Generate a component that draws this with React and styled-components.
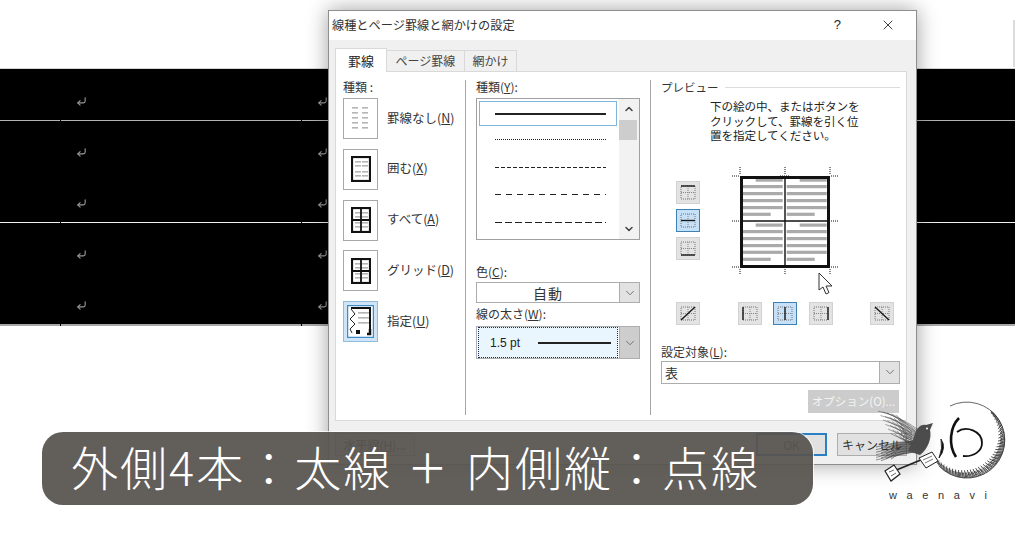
import React from 'react';
import styled, { createGlobalStyle } from 'styled-components';
import { ChevronDown, ChevronUp, CornerDownLeft, X } from 'lucide-react';

const GlobalStyle = createGlobalStyle`
  html, body {
    margin: 0;
    background: #fff;
  }
  * {
    box-sizing: border-box;
  }
`;

const Page = styled.div`
  position: relative;
  width: 1015px;
  height: 537px;
  overflow: hidden;
  background: #fff;
  font-family: "Noto Sans CJK JP", "Noto Sans", sans-serif;
  color: #222;
`;

/* document behind the dialog */
const DocTable = styled.div`
  margin-top: 68px;
  border-top: 1px solid #d4d4d4;
`;

const DocRow = styled.div`
  display: grid;
  grid-template-columns: 60px 240px 1fr;
  column-gap: 1px;
  height: ${props => props.$h}px;
  background: #000;
`;

const DocCell = styled.div`
  padding: ${props => props.$top}px 0 0 15px;
  border-bottom: ${props => props.$line || 'none'};
  color: #9a9a9a;
  line-height: 0;
`;

const EdgeMark = styled.div`
  position: absolute;
  top: 20px;
  right: 0;
  width: 2px;
  height: 47px;
  background: #dcdcdc;
`;

/* dialog */
const Dialog = styled.div`
  position: absolute;
  left: 328px;
  top: 10px;
  width: 589px;
  height: 455px;
  background: #f0f0f0;
  border: 1px solid #8e8e8e;
  box-shadow: 0 0 20px rgba(0, 0, 0, 0.38);
`;

const TitleBar = styled.div`
  display: flex;
  align-items: center;
  height: 29px;
  padding: 0 20px 2px 3px;
  background: #fff;
  font-size: 12.2px;
`;

const TitleText = styled.div`
  flex: 1;
  color: #333;
`;

const HelpMark = styled.div`
  margin-right: 39px;
  font-size: 13px;
  font-family: "Liberation Sans", sans-serif;
`;

const Tabs = styled.div`
  display: flex;
  align-items: flex-end;
  height: 31px;
  margin-left: 6px;
`;

const Tab = styled.div`
  width: ${props => props.$w}px;
  height: ${props => (props.$active ? 24 : 21)}px;
  display: flex;
  align-items: center;
  justify-content: center;
  padding-bottom: 1px;
  font-size: ${props => (props.$active ? 13 : 12)}px;
  border: 1px solid #d9d9d9;
  border-left: ${props => (props.$active ? '1px solid #d9d9d9' : 'none')};
  border-bottom: none;
  background: ${props => (props.$active ? '#fff' : '#f0f0f0')};
  margin-bottom: ${props => (props.$active ? -1 : 0)}px;
  position: relative;
  color: ${props => (props.$active ? '#222' : '#444')};
`;

const Panel = styled.div`
  display: grid;
  grid-template-columns: 129px 185px 1fr;
  width: 572px;
  height: 350px;
  margin-left: 6px;
  background: #fff;
  border: 1px solid #d9d9d9;
`;

const Column = styled.div`
  padding: 8px ${props => props.$right || 0}px 0 ${props => props.$left}px;
  position: relative;
`;

const Divided = styled(Column)`
  &::before {
    content: '';
    position: absolute;
    left: 0;
    top: 8px;
    bottom: 5px;
    width: 1px;
    background: #a6a6a6;
  }
`;

const Label = styled.div`
  font-size: 12px;
  line-height: 14px;
  height: 14px;
  color: #333;
  white-space: nowrap;
  u {
    text-underline-offset: 1px;
  }
`;

const OptionList = styled.div`
  display: flex;
  flex-direction: column;
  gap: 9.75px;
  margin-top: 4px;
`;

const OptionRow = styled.div`
  display: flex;
  align-items: center;
  gap: 9px;
  font-size: 12.5px;
  color: #333;
  white-space: nowrap;
`;

const OptionLabel = styled.span`
  padding-bottom: 3px;
`;

const OptionButton = styled.div`
  width: 35px;
  height: 41px;
  display: flex;
  align-items: center;
  justify-content: center;
  border: 1px solid ${props => (props.$active ? '#8fbbdc' : '#a8a8a8')};
  background: ${props => (props.$active ? '#cfe5f7' : '#fff')};
`;

const ListBox = styled.div`
  display: flex;
  width: 164px;
  height: 142px;
  margin: 4px 0 0;
  border: 1px solid #a0a0a0;
`;

const ListItems = styled.div`
  flex: 1;
  padding: 2px 2px 0;
`;

const ListItem = styled.div`
  height: ${props => (props.$active ? 25 : 27.5)}px;
  display: flex;
  align-items: center;
  padding: 0 10px 0 15px;
  border: 1px solid ${props => (props.$active ? '#7fb6dd' : 'transparent')};
`;

const LineSample = styled.div`
  width: 100%;
  height: ${props => props.$thick}px;
  background: repeating-linear-gradient(
    90deg,
    #222 0 ${props => props.$dash}px,
    transparent ${props => props.$dash}px ${props => props.$dash + props.$gap}px
  );
`;

const ScrollBar = styled.div`
  position: relative;
  width: 20px;
  display: flex;
  flex-direction: column;
  align-items: center;
  justify-content: space-between;
  padding: 4px 0;
  background: #f2f2f2;
  color: #444;
`;

const Thumb = styled.div`
  position: absolute;
  top: 21px;
  left: 0;
  right: 2px;
  height: 20px;
  background: #cdcdcd;
`;

const Combo = styled.div`
  display: flex;
  align-items: stretch;
  width: ${props => props.$w}px;
  height: ${props => props.$h}px;
  margin-top: ${props => props.$top || 0}px;
  font-size: 12px;
  border: 1px solid #adadad;
  background: #fff;
`;

const ComboValue = styled.div`
  flex: 1;
  display: flex;
  align-items: center;
  justify-content: ${props => (props.$center ? 'center' : 'flex-start')};
  padding: 0 ${props => (props.$center ? 0 : 3)}px;
  font-size: ${props => (props.$center ? 14 : 13)}px;
  letter-spacing: ${props => (props.$center ? 1 : 0)}px;
  color: #333;
`;

const FocusValue = styled.div`
  flex: 1;
  display: flex;
  align-items: center;
  gap: 18px;
  margin: 0 1px 0 1px;
  padding: 0 6px 0 11px;
  border: 1px dotted #1a2a55;
  background: #eaf6fd;
  font-family: "Liberation Sans", sans-serif;
  font-size: 12px;
  white-space: nowrap;
`;

const ComboButton = styled.div`
  flex: none;
  width: 20px;
  display: flex;
  align-items: center;
  justify-content: center;
  border-left: 1px solid #adadad;
  background: ${props => (props.$dark ? '#cdcdcd' : '#e2e2e2')};
  color: #666;
`;

const FieldGap = styled.div`
  height: ${props => props.$h}px;
`;

const PreviewHead = styled.div`
  display: flex;
  align-items: center;
  gap: 6px;
  font-size: 11.5px;
  line-height: 14px;
  color: #333;
  &::after {
    content: '';
    flex: 1;
    height: 1px;
    background: #dcdcdc;
  }
`;

const PreviewText = styled.div`
  margin: 5px 0 0 49px;
  font-size: 11.6px;
  line-height: 14.6px;
  letter-spacing: -0.1px;
  color: #222;
  white-space: pre;
`;

const PreviewRow = styled.div`
  display: flex;
  margin: 17px 0 0 15px;
  height: 122px;
`;

const SideButtons = styled.div`
  display: flex;
  flex-direction: column;
  gap: 5px;
  padding-top: 21px;
  margin-right: 25px;
`;

const EdgeButton = styled.div`
  width: 24px;
  height: 23px;
  display: flex;
  align-items: center;
  justify-content: center;
  border: 1px solid ${props => (props.$active ? '#3d81b5' : '#d2d2d2')};
  background: ${props => (props.$active ? '#c6e0f7' : '#e3e3e3')};
`;

const BottomButtons = styled.div`
  display: flex;
  justify-content: space-between;
  width: 218px;
  margin: 20px 0 0 15px;
`;

const MiddleButtons = styled.div`
  display: flex;
  gap: 11.5px;
`;

const TargetLabel = styled(Label)`
  margin-top: 20px;
`;

const OptionsRow = styled.div`
  display: flex;
  justify-content: flex-end;
  width: 238px;
  margin-top: 6px;
`;

const DisabledButton = styled.div`
  width: 91px;
  height: 23px;
  display: flex;
  align-items: center;
  justify-content: center;
  background: #cccccc;
  color: #f4f4f4;
  font-size: 11.5px;
  white-space: nowrap;
`;

const Footer = styled.div`
  display: flex;
  justify-content: space-between;
  margin: 12px 0 0 6px;
  width: 572px;
`;

const FooterGroup = styled.div`
  display: flex;
  gap: 10px;
`;

const FooterButton = styled.div`
  width: ${props => props.$w}px;
  height: 23px;
  display: flex;
  align-items: center;
  justify-content: center;
  font-size: 12px;
  color: #333;
  background: #e1e1e1;
  border: ${props => (props.$primary ? '2px solid #2c7fc4' : '1px solid #adadad')};
  white-space: nowrap;
`;

const Pointer = styled.svg`
  position: absolute;
  left: 817px;
  top: 271px;
`;

/* caption */
const Caption = styled.div`
  position: absolute;
  left: 42px;
  top: 432px;
  width: 771px;
  height: 73px;
  padding: 0 0 6px 29px;
  display: flex;
  align-items: center;
  border-radius: 21px;
  background: rgba(88, 84, 80, 0.94);
  box-shadow: 0 0 0 1px rgba(255, 255, 255, 0.75);
  color: #fff;
  font-size: 47px;
  letter-spacing: 2px;
  font-weight: 300;
  line-height: 1;
  white-space: pre;
`;

const CaptionPlus = styled.span`
  margin: 0 4px 0 3px;
  font-size: 40px;
  font-weight: 400;
`;

/* logo */
const LogoBox = styled.div`
  position: absolute;
  left: 870px;
  top: 395px;
  width: 140px;
  height: 112px;
`;

const LogoText = styled.div`
  position: absolute;
  left: 19px;
  top: 93px;
  font-family: "Liberation Sans", sans-serif;
  font-size: 11px;
  line-height: 14px;
  letter-spacing: 9.6px;
  color: #333;
`;

const dash = (x, y, w) => <rect x={x} y={y} width={w} height="1.6" fill="#b5b5b5" />;

const TextDashes = ({ cols, top, rows, step }) => (
  <>
    {cols.map(x =>
      Array.from({ length: rows }).map((_, i) => (
        <React.Fragment key={`${x}-${i}`}>{dash(x, top + i * step, 6)}</React.Fragment>
      ))
    )}
  </>
);

const OptionIcon = ({ type }) => {
  if (type === 'none') {
    return (
      <svg width="21" height="26" viewBox="0 0 21 26">
        <TextDashes cols={[2, 12]} top={1} rows={5} step={5} />
      </svg>
    );
  }
  if (type === 'custom') {
    return (
      <svg width="27" height="33" viewBox="0 0 27 33">
        <rect x="0" y="0" width="27" height="33" fill="#fff" stroke="#3e8dc9" strokeWidth="2.5" />
        <path d="M4 3H23V25" fill="none" stroke="#111" strokeWidth="2" />
        <path d="M4 4L8 9L3 14L8 19L3 24L5 28" fill="none" stroke="#222" strokeWidth="1" />
        <TextDashes cols={[11, 16]} top={7} rows={3} step={5} />
        <rect x="9" y="25" width="4" height="4" fill="#111" />
        <path d="M20 29H23V24" fill="none" stroke="#111" strokeWidth="2.5" />
      </svg>
    );
  }
  return (
    <svg width="20" height="26" viewBox="0 0 20 26">
      <rect x="1" y="1" width="18" height="24" fill="#fff" stroke="#111" strokeWidth="2.2" />
      <TextDashes cols={[4, 11]} top={5} rows={2} step={4} />
      <TextDashes cols={[4, 11]} top={15} rows={2} step={4} />
      {type !== 'box' && <path d="M10 1V25M1 13H19" stroke="#111" strokeWidth="1.8" />}
    </svg>
  );
};

const EdgeIcon = ({ line }) => (
  <svg width="18" height="17" viewBox="0 0 18 17">
    <rect x="2" y="2" width="14" height="13" fill="none" stroke="#777" strokeWidth="1" strokeDasharray="1 1" />
    <path d="M9 2V15M2 8.5H16" fill="none" stroke="#888" strokeWidth="1" strokeDasharray="1 1" />
    <path d={line} fill="none" stroke="#1a1a1a" strokeWidth="1.4" />
  </svg>
);

const barRows = [
  { top: 18.5, first: true },
  { top: 25 }, { top: 32 }, { top: 39 }, { top: 46 },
  { top: 52.7, last: true },
  { top: 63.5, first: true },
  { top: 70 }, { top: 77 }, { top: 84 }, { top: 90.7 },
  { top: 97.7, last: true },
];

const barsFor = (left, row) => {
  if (row.first) return { x: left + 13, w: 27 };
  if (row.last) return { x: left, w: 28 };
  return { x: left, w: 40 };
};

const PreviewDrawing = () => (
  <svg width="120" height="122" viewBox="0 0 120 122">
    {[17.7, 61.7].map(left =>
      barRows.map(row => {
        const { x, w } = barsFor(left, row);
        return <rect key={`${left}-${row.top}`} x={x} y={row.top} width={w} height="3.2" fill="#aaa" />;
      })
    )}
    <path d="M60 17V107" stroke="#555" strokeWidth="2" />
    <path d="M16 61H104" stroke="#111" strokeWidth="1.5" />
    <rect x="16.5" y="17.5" width="87" height="89" fill="none" stroke="#111" strokeWidth="3" />
    <path
      d="M15 7V15M60 7V15M105 7V15M15 109V115M60 109V115M105 109V115M7 16H14M106 16H113M7 61H14M106 61H113M7 107H14M106 107H113M55 16H65M55 107H65"
      fill="none"
      stroke="#111"
      strokeWidth="1"
      strokeDasharray="1 1"
    />
  </svg>
);

const ringHatch = Array.from({ length: 110 }).map((_, i) => {
  const a = (-50 + (i * 200) / 110) * (Math.PI / 180);
  const swell = Math.max(0, Math.sin(((i + 6) / 122) * Math.PI));
  const len = 1 + swell * 8 * (i % 3 === 0 ? 1 : 0.65);
  const r = 38;
  const x1 = 97 + Math.cos(a) * r;
  const y1 = 45 + Math.sin(a) * r;
  const x2 = 97 + Math.cos(a + 0.05) * (r - len);
  const y2 = 45 + Math.sin(a + 0.05) * (r - len);
  return `M${x1.toFixed(1)} ${y1.toFixed(1)}L${x2.toFixed(1)} ${y2.toFixed(1)}`;
});

const wingHatch = Array.from({ length: 30 }).map((_, i) => {
  const y = 16 + i * 0.9;
  const x1 = 8 + (i % 5) * 4 + i * 0.5;
  const x2 = 50 - (i % 3) * 4;
  const y2 = 36 + i * 0.5;
  return `M${x1.toFixed(1)} ${y.toFixed(1)}Q30 ${(y + 5).toFixed(1)} ${x2.toFixed(1)} ${y2.toFixed(1)}`;
});

const tailHatch = Array.from({ length: 22 }).map((_, i) => {
  const y = 46 + i * 0.65;
  const x1 = 6 + (i % 4) * 5;
  return `M${x1} ${(y + 6).toFixed(1)}Q26 ${y.toFixed(1)} 48 ${(46 + i * 0.5).toFixed(1)}`;
});

const LogoMark = () => (
  <svg width="140" height="92" viewBox="0 0 140 92">
    <path d="M80 11A38 38 0 1 1 69 71" fill="none" stroke="#222" strokeWidth="0.7" />
    <path d={ringHatch.join('')} fill="none" stroke="#222" strokeWidth="0.8" />
    <path d="M71 44Q77 53 69 63Q73 53 71 44Z" fill="#111" stroke="#111" strokeWidth="0.8" />
    <path d="M89 23C80 32 78 50 86 62" fill="none" stroke="#111" strokeWidth="2.6" />
    <path d="M87 37C96 30 112 36 112 48C112 56 104 62 93 61" fill="none" stroke="#111" strokeWidth="1.8" />
    <path d={wingHatch.join('')} fill="none" stroke="#444" strokeWidth="0.5" />
    <path d={tailHatch.join('')} fill="none" stroke="#333" strokeWidth="0.55" />
    <path d="M44 42C46 34 50 29 56 30L63 28L60 35C62 43 58 54 50 60L38 56Z" fill="#4c4c4c" />
    <circle cx="57" cy="33.5" r="1" fill="#fff" />
    <path d="M24 76L58 62" stroke="#222" strokeWidth="1.8" />
    <path d="M49 63L62 57L68 66L56 73Z" fill="#fff" stroke="#222" strokeWidth="1" />
    <path d="M53 65L62 61M55 68L63 64" stroke="#555" strokeWidth="0.8" />
    <path d="M15 76L24 70L30 79L21 86Z" fill="#fff" stroke="#222" strokeWidth="1.2" />
    <path d="M19 77L24 75M21 81L26 78" stroke="#444" strokeWidth="0.8" />
  </svg>
);

const optionItems = [
  { type: 'none', label: '罫線なし(', key: 'N' },
  { type: 'box', label: '囲む(', key: 'X' },
  { type: 'all', label: 'すべて(', key: 'A' },
  { type: 'grid', label: 'グリッド(', key: 'D' },
  { type: 'custom', label: '指定(', key: 'U', active: true },
];

const lineItems = [
  { thick: 2, dash: 10, gap: 0, active: true },
  { thick: 1, dash: 1, gap: 1 },
  { thick: 1.2, dash: 4, gap: 2 },
  { thick: 1.2, dash: 6, gap: 5 },
  { thick: 1.2, dash: 7, gap: 3 },
];

const docRows = [
  { h: 52, top: 27, line: '1px solid #b4b4b4' },
  { h: 51, top: 26 },
  { h: 51, top: 26, line: '1px solid #f2f2f2' },
  { h: 51, top: 26 },
  { h: 52, top: 26, line: '2px solid #a8a8a8' },
];

const DocBackground = () => (
  <DocTable>
    {docRows.map((row, i) => (
      <DocRow key={i} $h={row.h}>
        {[false, true, true].map((mark, j) => (
          <DocCell key={j} $top={row.top} $line={row.line}>
            {mark && <CornerDownLeft size={11} strokeWidth={2.4} />}
          </DocCell>
        ))}
      </DocRow>
    ))}
  </DocTable>
);

export default function App() {
  return (
    <Page>
      <GlobalStyle />
      <DocBackground />
      <EdgeMark />
      <Dialog>
        <TitleBar>
          <TitleText>線種とページ罫線と網かけの設定</TitleText>
          <HelpMark>?</HelpMark>
          <X size={16} strokeWidth={1.3} />
        </TitleBar>
        <Tabs>
          <Tab $w={52} $active>罫線</Tab>
          <Tab $w={78}>ページ罫線</Tab>
          <Tab $w={52}>網かけ</Tab>
        </Tabs>
        <Panel>
          <Column $left={7}>
            <Label>種類 :</Label>
            <OptionList>
              {optionItems.map(item => (
                <OptionRow key={item.type}>
                  <OptionButton $active={item.active}>
                    <OptionIcon type={item.type} />
                  </OptionButton>
                  <OptionLabel>{item.label}<u>{item.key}</u>)</OptionLabel>
                </OptionRow>
              ))}
            </OptionList>
          </Column>
          <Divided $left={11}>
            <Label>種類(<u>Y</u>):</Label>
            <ListBox>
              <ListItems>
                {lineItems.map((item, i) => (
                  <ListItem key={i} $active={item.active}>
                    <LineSample $thick={item.thick} $dash={item.dash} $gap={item.gap} />
                  </ListItem>
                ))}
              </ListItems>
              <ScrollBar>
                <ChevronUp size={12} strokeWidth={3} />
                <Thumb />
                <ChevronDown size={12} strokeWidth={3} />
              </ScrollBar>
            </ListBox>
            <FieldGap $h={25} />
            <Label>色(<u>C</u>):</Label>
            <Combo $w={164} $h={21} $top={3}>
              <ComboValue $center>自動</ComboValue>
              <ComboButton><ChevronDown size={14} strokeWidth={1.5} /></ComboButton>
            </Combo>
            <FieldGap $h={4} />
            <Label>線の太さ(<u>W</u>):</Label>
            <Combo $w={164} $h={33} $top={5}>
              <FocusValue>
                1.5 pt
                <LineSample $thick={2} $dash={10} $gap={0} />
              </FocusValue>
              <ComboButton $dark><ChevronDown size={14} strokeWidth={1.5} /></ComboButton>
            </Combo>
          </Divided>
          <Divided $left={11} $right={6}>
            <PreviewHead>プレビュー</PreviewHead>
            <PreviewText>{'下の絵の中、またはボタンを\nクリックして、罫線を引く位\n置を指定してください。'}</PreviewText>
            <PreviewRow>
              <SideButtons>
                <EdgeButton><EdgeIcon line="M2 2H16" /></EdgeButton>
                <EdgeButton $active><EdgeIcon line="M2 8.5H16" /></EdgeButton>
                <EdgeButton><EdgeIcon line="M2 15H16" /></EdgeButton>
              </SideButtons>
              <PreviewDrawing />
            </PreviewRow>
            <BottomButtons>
              <EdgeButton><EdgeIcon line="M2 15L16 2" /></EdgeButton>
              <MiddleButtons>
                <EdgeButton><EdgeIcon line="M2 2V15" /></EdgeButton>
                <EdgeButton $active><EdgeIcon line="M9 2V15" /></EdgeButton>
                <EdgeButton><EdgeIcon line="M16 2V15" /></EdgeButton>
              </MiddleButtons>
              <EdgeButton><EdgeIcon line="M2 2L16 15" /></EdgeButton>
            </BottomButtons>
            <TargetLabel>設定対象(<u>L</u>):</TargetLabel>
            <Combo $w={239} $h={23} $top={2}>
              <ComboValue>表</ComboValue>
              <ComboButton><ChevronDown size={14} strokeWidth={1.5} /></ComboButton>
            </Combo>
            <OptionsRow>
              <DisabledButton>オプション(O)...</DisabledButton>
            </OptionsRow>
          </Divided>
        </Panel>
        <Footer>
          <FooterButton $w={80}>水平線(<u>H</u>)...</FooterButton>
          <FooterGroup>
            <FooterButton $w={71} $primary>OK</FooterButton>
            <FooterButton $w={70}>キャンセル</FooterButton>
          </FooterGroup>
        </Footer>
      </Dialog>
      <Pointer width="18" height="26" viewBox="0 0 18 26">
        <path d="M2 2V19L6 16L9 23L12 21.5L9 15H15Z" fill="#fff" stroke="#333" strokeWidth="1" />
      </Pointer>
      <Caption>外側4本：太線 <CaptionPlus>＋</CaptionPlus> 内側縦：点線</Caption>
      <LogoBox>
        <LogoMark />
        <LogoText>waenavi</LogoText>
      </LogoBox>
    </Page>
  );
}
